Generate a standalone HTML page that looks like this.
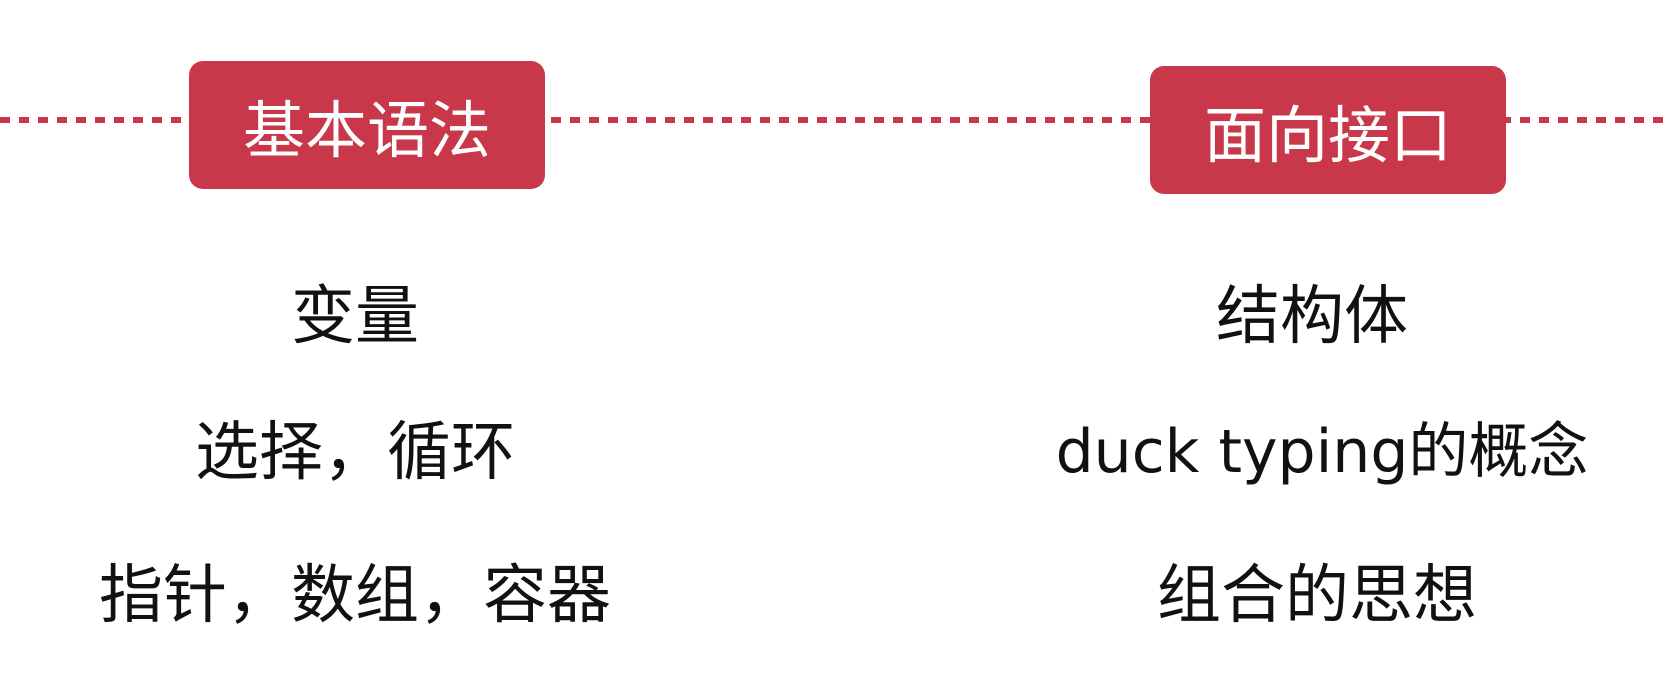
<!DOCTYPE html>
<html><head><meta charset="utf-8"><style>
body{margin:0;width:1666px;height:686px;background:#fff;overflow:hidden;position:relative;font-family:"Liberation Sans","Noto Sans CJK SC",sans-serif}
.line{position:absolute;left:0;width:1666px;top:117px;height:6px;background:repeating-linear-gradient(90deg,#c8384a 0 10px,transparent 10px 19px)}
.box{position:absolute;background:#c8384a;border-radius:14px;color:#fff;font-size:62px;display:flex;align-items:center;justify-content:center}
.t{position:absolute;font-size:64px;color:#111;text-align:center;width:800px;line-height:70px}
</style></head><body>
<div class="line"></div>
<div class="box" style="left:189px;top:61px;width:356px;height:128px">基本语法</div>
<div class="box" style="left:1150px;top:66px;width:356px;height:128px">面向接口</div>
<div class="t" style="left:-45px;top:281px">变量</div>
<div class="t" style="left:-45px;top:417px">选择，循环</div>
<div class="t" style="left:-45px;top:560px">指针，数组，容器</div>
<div class="t" style="left:912px;top:281px">结构体</div>
<div class="t" style="left:922px;top:417px;font-family:'DejaVu Sans','Noto Sans CJK SC',sans-serif;font-size:60px">duck typing的概念</div>
<div class="t" style="left:917px;top:560px">组合的思想</div>
</body></html>
